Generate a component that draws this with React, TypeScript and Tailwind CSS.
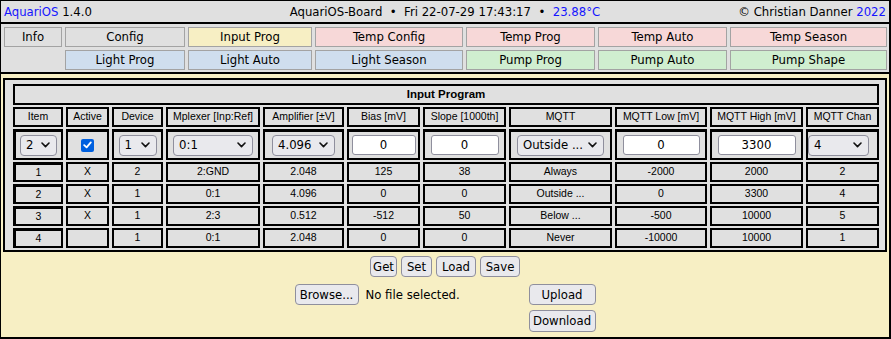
import React from "react";

const UI = "font-['DejaVu_Sans_Condensed','DejaVu_Sans',sans-serif] [font-stretch:condensed]";
const TB = "font-['Liberation_Sans',Arial,sans-serif]";

function Chevron() {
  return (
    <svg width="9" height="6" viewBox="0 0 9 6" className="shrink-0">
      <path d="M1 1 L4.5 4.6 L8 1" fill="none" stroke="#111" strokeWidth="1.6" strokeLinecap="round" strokeLinejoin="round" />
    </svg>
  );
}

function Sel({ value, w }: { value: string; w: string }) {
  return (
    <div className={`${w} h-[21px] flex items-center justify-between pl-[5px] pr-[6px] bg-[#e9e9ed] border border-[#8f8f9d] rounded-[4px] text-[13px] text-black ${UI}`}>
      <span className="whitespace-nowrap">{value}</span>
      <Chevron />
    </div>
  );
}

function Inp({ value, w }: { value: string; w: string }) {
  return (
    <div className={`${w} h-[20px] flex items-center justify-center bg-white border border-[#8f8f9d] rounded-[3px] text-[13px] text-black ${UI}`}>
      {value}
    </div>
  );
}

function Check() {
  return (
    <div className="w-[13px] h-[13px] rounded-[2px] bg-[#0060df] flex items-center justify-center">
      <svg width="9" height="8" viewBox="0 0 9 8">
        <path d="M1.2 4.2 L3.6 6.4 L7.8 1.4" stroke="white" strokeWidth="1.8" fill="none" strokeLinecap="round" strokeLinejoin="round" />
      </svg>
    </div>
  );
}

function Btn({ children, w, h = "h-[21px]" }: { children: React.ReactNode; w: string; h?: string }) {
  return (
    <div className={`${w} ${h} flex items-center justify-center bg-[#e9e9ed] border border-[#8f8f9d] rounded-[4px] text-[13px] text-black ${UI}`}>
      {children}
    </div>
  );
}

const GRAY = "bg-[#e0e0e0]";
const YEL = "bg-[#f7efc4]";
const RED = "bg-[#f7d8d8]";
const BLUE = "bg-[#cfdeee]";
const GREEN = "bg-[#d0eed0]";

const nav1: [string, string][] = [
  ["Info", GRAY],
  ["Config", GRAY],
  ["Input Prog", YEL],
  ["Temp Config", RED],
  ["Temp Prog", RED],
  ["Temp Auto", RED],
  ["Temp Season", RED],
];
const nav2: [string, string][] = [
  ["Light Prog", BLUE],
  ["Light Auto", BLUE],
  ["Light Season", BLUE],
  ["Pump Prog", GREEN],
  ["Pump Auto", GREEN],
  ["Pump Shape", GREEN],
];

const headers = [
  "Item",
  "Active",
  "Device",
  "Mplexer [Inp:Ref]",
  "Amplifier [±V]",
  "Bias [mV]",
  "Slope [1000th]",
  "MQTT",
  "MQTT Low [mV]",
  "MQTT High [mV]",
  "MQTT Chan",
];

const rows = [
  ["1", "X", "2", "2:GND", "2.048", "125", "38", "Always", "-2000", "2000", "2"],
  ["2", "X", "1", "0:1", "4.096", "0", "0", "Outside ...", "0", "3300", "4"],
  ["3", "X", "1", "2:3", "0.512", "-512", "50", "Below ...", "-500", "10000", "5"],
  ["4", "", "1", "0:1", "2.048", "0", "0", "Never", "-10000", "10000", "1"],
];

function NavCell({ label, bg }: { label: string; bg: string }) {
  return (
    <div className={`h-[20px] flex items-center justify-center border border-[#a3a3a3] ${bg} text-[13px] text-black ${UI}`}>
      {label}
    </div>
  );
}

export default function App() {
  const cell = "border-2 border-black flex items-center justify-center";
  return (
    <div className={`w-[891px] h-[339px] flex flex-col border-l border-t border-r-2 border-b-2 border-black bg-white ${UI}`}>
      {/* header */}
      <div className={`h-[21px] shrink-0 grid grid-cols-[1fr_auto_1fr] items-center px-[3px] ${GRAY} text-[13px] text-black border-b-2 border-black box-content`}>
        <div className="whitespace-nowrap">
          <span className="text-[#1515ff]">AquariOS</span> 1.4.0
        </div>
        <div className="whitespace-nowrap">
          AquariOS-Board{"\u00a0\u00a0•\u00a0\u00a0"}Fri 22-07-29 17:43:17{"\u00a0\u00a0•\u00a0\u00a0"}
          <span className="text-[#1515ff]">23.88°C</span>
        </div>
        <div className="whitespace-nowrap text-right">
          © Christian Danner <span className="text-[#1515ff]">2022</span>
        </div>
      </div>

      {/* nav */}
      <div className={`shrink-0 ${GRAY} pt-[3px] pb-[2px] pl-[3px] border-b-2 border-black`}>
        <div className="grid grid-cols-[58px_120px_124px_148px_129px_129px_157px] gap-[3px]">
          {nav1.map(([l, b]) => (
            <NavCell key={l} label={l} bg={b} />
          ))}
          <div />
          {nav2.map(([l, b]) => (
            <NavCell key={l} label={l} bg={b} />
          ))}
        </div>
      </div>

      {/* content */}
      <div className={`flex-1 ${YEL} pt-[4px] flex flex-col`}>
        <div className={`ml-[2px] w-[884px] border-2 border-black ${GRAY} pt-[4px] pb-[2px] pl-[8px]`}>
          <div className={`grid grid-cols-[50px_43px_51px_94px_81px_73px_83px_103px_92px_93px_73px] gap-x-[3px] gap-y-[2px] text-black ${TB}`}>
            <div className={`col-span-11 h-[21px] ${cell} font-bold text-[11.5px]`}>Input Program</div>
            {headers.map((h) => (
              <div key={h} className={`h-[20px] ${cell} text-[10.5px] whitespace-nowrap`}>
                {h}
              </div>
            ))}
            {/* input row */}
            <div className={`h-[31px] ${cell} border-l-[3px] border-t-[3px]`}>
              <Sel value="2" w="w-[37px]" />
            </div>
            <div className={`h-[31px] ${cell} border-t-[3px]`}>
              <Check />
            </div>
            <div className={`h-[31px] ${cell} border-t-[3px]`}>
              <Sel value="1" w="w-[38px]" />
            </div>
            <div className={`h-[31px] ${cell} border-t-[3px]`}>
              <Sel value="0:1" w="w-[80px]" />
            </div>
            <div className={`h-[31px] ${cell} border-t-[3px]`}>
              <Sel value="4.096" w="w-[63px]" />
            </div>
            <div className={`h-[31px] ${cell} border-t-[3px]`}>
              <Inp value="0" w="w-[64px]" />
            </div>
            <div className={`h-[31px] ${cell} border-t-[3px]`}>
              <Inp value="0" w="w-[68px]" />
            </div>
            <div className={`h-[31px] ${cell} border-t-[3px]`}>
              <Sel value="Outside ..." w="w-[87px]" />
            </div>
            <div className={`h-[31px] ${cell} border-t-[3px]`}>
              <Inp value="0" w="w-[77px]" />
            </div>
            <div className={`h-[31px] ${cell} border-t-[3px]`}>
              <Inp value="3300" w="w-[78px]" />
            </div>
            <div className={`h-[31px] border-2 border-t-[3px] border-black flex items-center justify-start`}>
              <Sel value="4" w="w-[61px]" />
            </div>
            {/* data rows */}
            {rows.map((r, ri) =>
              r.map((v, ci) => (
                <div
                  key={`${ri}-${ci}`}
                  className={`h-[20px] ${cell} text-[10.5px] whitespace-nowrap ${ci === 0 ? "border-l-[3px] border-t-[3px]" : ""}`}
                >
                  {v}
                </div>
              ))
            )}
          </div>
        </div>

        {/* buttons */}
        <div className="mt-[4px] flex justify-center gap-[4px]">
          <Btn w="w-[27px]">Get</Btn>
          <Btn w="w-[31px]">Set</Btn>
          <Btn w="w-[40px]">Load</Btn>
          <Btn w="w-[40px]">Save</Btn>
        </div>
        <div className="mt-[7px] flex justify-center gap-[4px]">
          <div className="w-[230px] flex items-start gap-[7px]">
            <Btn w="w-[64px]">Browse...</Btn>
            <span className="text-[13px] leading-[21px] text-black whitespace-nowrap">No file selected.</span>
          </div>
          <div className="w-[67px] flex flex-col gap-[5px]">
            <Btn w="w-[67px]">Upload</Btn>
            <Btn w="w-[67px]" h="h-[22px]">Download</Btn>
          </div>
        </div>
      </div>
    </div>
  );
}
